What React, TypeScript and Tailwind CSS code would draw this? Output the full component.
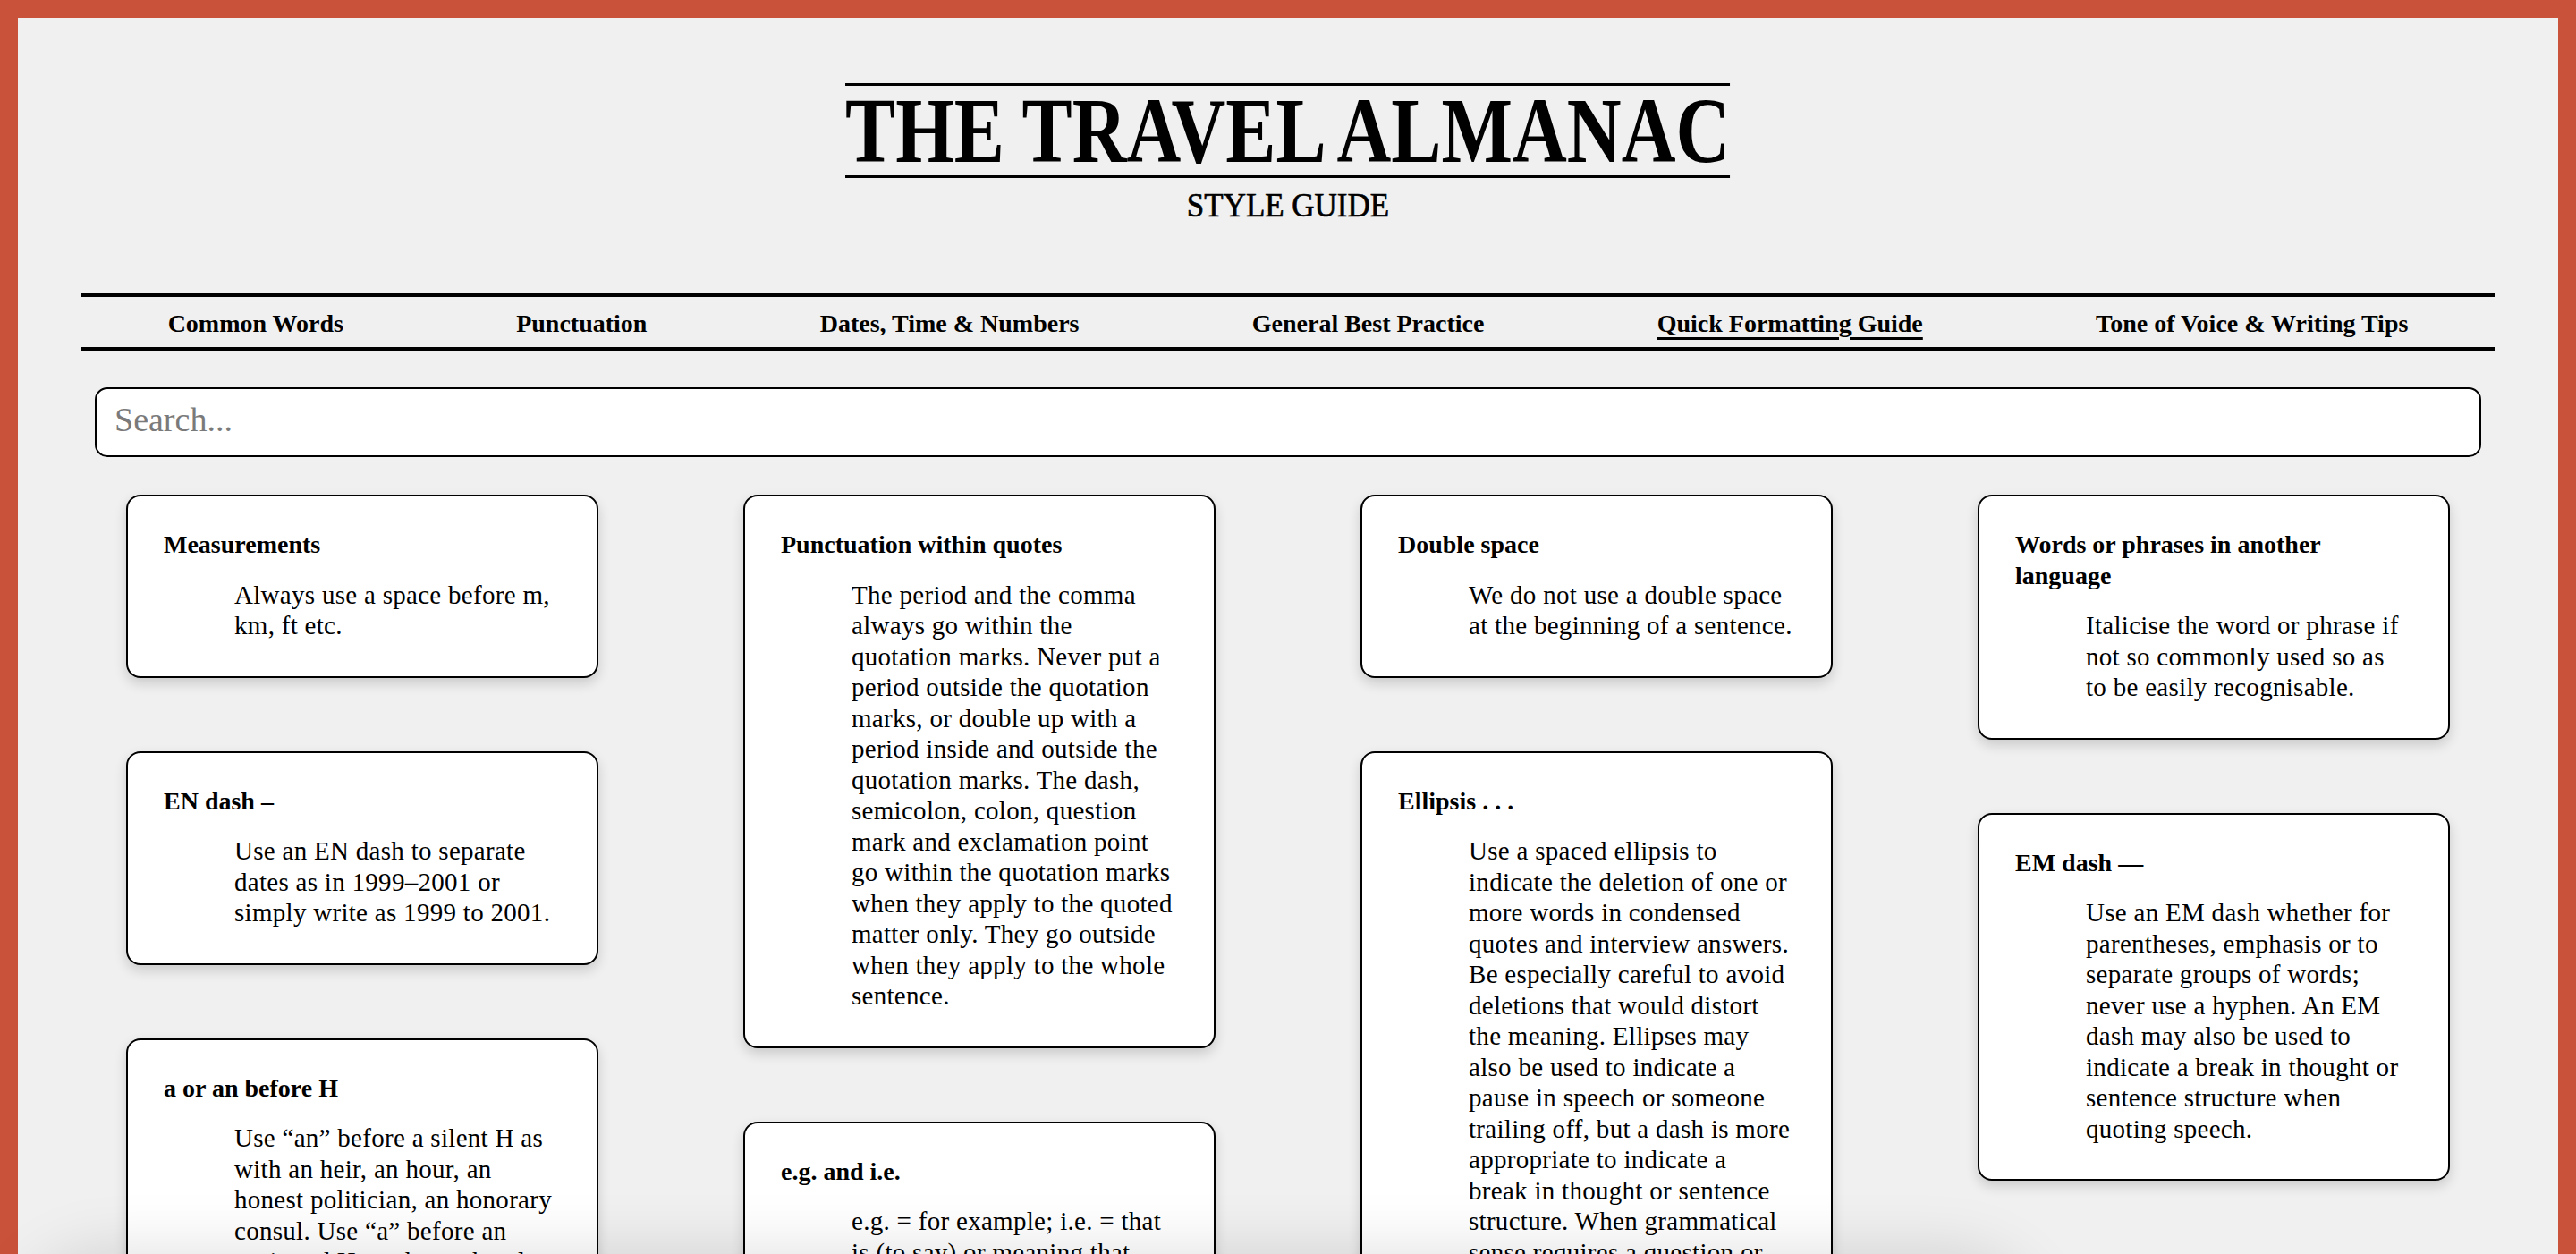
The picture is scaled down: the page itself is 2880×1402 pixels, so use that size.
import React from "react";

type Card = { title: string[]; body: string[] };

const columns: Card[][] = [
  [
    { title: ["Measurements"], body: ["Always use a space before m,", "km, ft etc."] },
    {
      title: ["EN dash –"],
      body: ["Use an EN dash to separate", "dates as in 1999–2001 or", "simply write as 1999 to 2001."],
    },
    {
      title: ["a or an before H"],
      body: [
        "Use “an” before a silent H as",
        "with an heir, an hour, an",
        "honest politician, an honorary",
        "consul. Use “a” before an",
        "aspirated H, such as a hotel,",
        "a historic event, a hero.",
      ],
    },
  ],
  [
    {
      title: ["Punctuation within quotes"],
      body: [
        "The period and the comma",
        "always go within the",
        "quotation marks. Never put a",
        "period outside the quotation",
        "marks, or double up with a",
        "period inside and outside the",
        "quotation marks. The dash,",
        "semicolon, colon, question",
        "mark and exclamation point",
        "go within the quotation marks",
        "when they apply to the quoted",
        "matter only. They go outside",
        "when they apply to the whole",
        "sentence.",
      ],
    },
    {
      title: ["e.g. and i.e."],
      body: ["e.g. = for example; i.e. = that", "is (to say) or meaning that.", "Both are followed by a comma."],
    },
  ],
  [
    { title: ["Double space"], body: ["We do not use a double space", "at the beginning of a sentence."] },
    {
      title: ["Ellipsis . . ."],
      body: [
        "Use a spaced ellipsis to",
        "indicate the deletion of one or",
        "more words in condensed",
        "quotes and interview answers.",
        "Be especially careful to avoid",
        "deletions that would distort",
        "the meaning. Ellipses may",
        "also be used to indicate a",
        "pause in speech or someone",
        "trailing off, but a dash is more",
        "appropriate to indicate a",
        "break in thought or sentence",
        "structure. When grammatical",
        "sense requires a question or",
        "exclamation mark, use it.",
      ],
    },
  ],
  [
    {
      title: ["Words or phrases in another", "language"],
      body: ["Italicise the word or phrase if", "not so commonly used so as", "to be easily recognisable."],
    },
    {
      title: ["EM dash —"],
      body: [
        "Use an EM dash whether for",
        "parentheses, emphasis or to",
        "separate groups of words;",
        "never use a hyphen. An EM",
        "dash may also be used to",
        "indicate a break in thought or",
        "sentence structure when",
        "quoting speech.",
      ],
    },
  ],
];

const navItems = [
  "Common Words",
  "Punctuation",
  "Dates, Time & Numbers",
  "General Best Practice",
  "Quick Formatting Guide",
  "Tone of Voice & Writing Tips",
];

function Lines({ lines }: { lines: string[] }) {
  return (
    <>
      {lines.map((l, i) => (
        <React.Fragment key={i}>
          {i > 0 && <br />}
          {l}
        </React.Fragment>
      ))}
    </>
  );
}

function StyleCard({ card }: { card: Card }) {
  return (
    <div className="bg-white border-2 border-black rounded-[16px] pt-[37px] pb-[39px] px-[40px] shadow-[0_6px_14px_rgba(0,0,0,0.16)]">
      <h3 className="text-[28px] font-bold leading-[34.5px] whitespace-nowrap">
        <Lines lines={card.title} />
      </h3>
      <p className="mt-[21px] ml-[79px] text-[29px] leading-[34.5px] tracking-[0.01em] whitespace-nowrap">
        <Lines lines={card.body} />
      </p>
    </div>
  );
}

export default function App() {
  return (
    <div className="relative h-[1402px] overflow-hidden bg-[#f0f0f0] text-black font-['Liberation_Serif','Times_New_Roman',serif]">
      <div className="min-h-[1600px] border-x-[20px] border-t-[20px] border-[#c9523a]">
        <header className="pt-[73px] flex flex-col items-center">
          <h1 className="border-y-[3px] border-black text-[104px] leading-[100px] font-bold scale-x-[0.81] whitespace-nowrap">
            THE TRAVEL ALMANAC
          </h1>
          <div className="mt-[8px] text-[38px] leading-[44px] scale-x-[0.92] whitespace-nowrap [-webkit-text-stroke:0.7px_black]">
            STYLE GUIDE
          </div>
        </header>

        <nav className="mx-[71px] mt-[77px] h-[64px] border-y-4 border-black flex items-center justify-around">
          {navItems.map((item) => (
            <a
              key={item}
              href="#"
              className={
                item === "Quick Formatting Guide"
                  ? "text-[28px] font-bold leading-[56px] pt-[3px] underline decoration-[3px] underline-offset-[6px]"
                  : "text-[28px] font-bold leading-[56px] pt-[3px]"
              }
            >
              {item}
            </a>
          ))}
        </nav>

        <div className="mx-[86px] mt-[41px]">
          <input
            type="text"
            placeholder="Search..."
            className="w-full h-[78px] bg-white border-2 border-black rounded-[14px] px-[20px] pb-[6px] text-[38px] font-['Liberation_Serif',serif] placeholder:text-[#7a7a7a] outline-none"
          />
        </div>

        <div className="mx-[86px] mt-[42px] px-[35px] grid grid-cols-4 gap-x-[162px] items-start">
          {columns.map((col, ci) => (
            <div key={ci} className="flex flex-col gap-[82px]">
              {col.map((card, i) => (
                <StyleCard key={i} card={card} />
              ))}
            </div>
          ))}
        </div>
      </div>

      <div className="pointer-events-none absolute left-[60px] top-[1440px] w-[2180px] h-[120px] rounded-[60px] shadow-[0_0_70px_40px_rgba(0,0,0,0.13)]" />
    </div>
  );
}
